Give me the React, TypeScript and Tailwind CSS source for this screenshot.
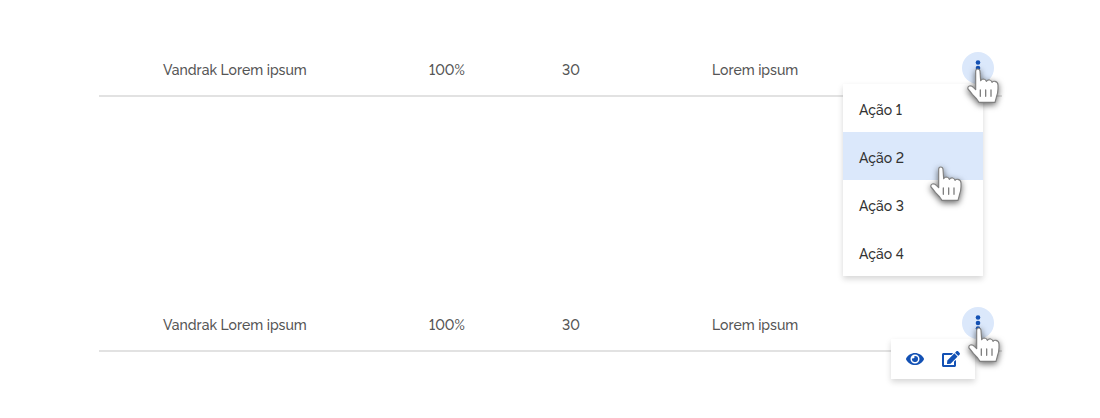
import React from "react";
import { FaEye, FaEdit } from "react-icons/fa";

function Hand({ className }: { className: string }) {
  return (
    <svg
      viewBox="0 0 108 126"
      className={`pointer-events-none absolute z-20 h-[42px] w-[36px] overflow-visible drop-shadow-[0_2px_3px_rgba(0,0,0,0.6)] ${className}`}
    >
      <path
        d="M32 68V13Q32 6 38 6Q45 6 45 13L47 41Q50 36 56 36Q62 37 64 43Q68 38 74 39Q79 40 81 46Q84 42 90 43Q99 45 99 54V65Q99 78 94 91L90 106H42L35 96Q29 89 22 82Q15 73 9 66Q7 59 13 57Q20 55 25 61Z"
        fill="#fff"
        stroke="#808080"
        strokeWidth="3.5"
        strokeLinejoin="round"
      />
      <path d="M46 69V88M62 69V88M78 69V88" stroke="#808080" strokeWidth="4" strokeLinecap="round" />
    </svg>
  );
}

function MoreButton() {
  return (
    <button className="flex size-8 items-center justify-center rounded-full bg-[#dbe8fb]">
      <svg viewBox="0 0 32 32" className="size-8" fill="#1351b4">
        <circle cx="16" cy="10.5" r="2.3" />
        <circle cx="16" cy="16" r="2.3" />
        <circle cx="16" cy="21.5" r="2.3" />
      </svg>
    </button>
  );
}

function Row({ children }: { children: React.ReactNode }) {
  return (
    <div className="relative ml-[99px] flex h-[45px] w-[903px] border-b-2 border-[#e2e2e2] pl-16 text-[14px] leading-9 text-[#555]">
      <span className="w-[266px]">Vandrak Lorem ipsum</span>
      <span className="w-[133px]">100%</span>
      <span className="w-[150px]">30</span>
      <span className="w-[250px]">Lorem ipsum</span>
      <MoreButton />
      {children}
    </div>
  );
}

const actions = ["Ação 1", "Ação 2", "Ação 3", "Ação 4"];

export default function App() {
  return (
    <main className="flex h-[418px] w-[1100px] flex-col gap-[210px] overflow-hidden bg-white pt-[52px] font-['Raleway','Lato',sans-serif] font-medium lining-nums">
      <Row>
        <ul className="absolute top-8 left-[744px] z-10 w-[140px] bg-white text-[#333] shadow-[0_3px_6px_rgba(0,0,0,0.16)]">
          {actions.map((label, i) => (
            <li
              key={label}
              className={`h-12 pl-4 leading-[52px] ${i === 1 ? "bg-[#dbe8fb]" : ""}`}
            >
              {label}
            </li>
          ))}
        </ul>
        <Hand className="top-[15px] left-[866px]" />
        <Hand className="top-[113px] left-[829px]" />
      </Row>
      <Row>
        <div className="absolute top-8 left-[792px] z-10 flex h-10 w-[84px] items-center gap-[18px] bg-white pl-[15px] text-[18px] text-[#1351b4] shadow-[0_3px_6px_rgba(0,0,0,0.16)]">
          <FaEye />
          <FaEdit />
        </div>
        <Hand className="top-[19px] left-[867px]" />
      </Row>
    </main>
  );
}
